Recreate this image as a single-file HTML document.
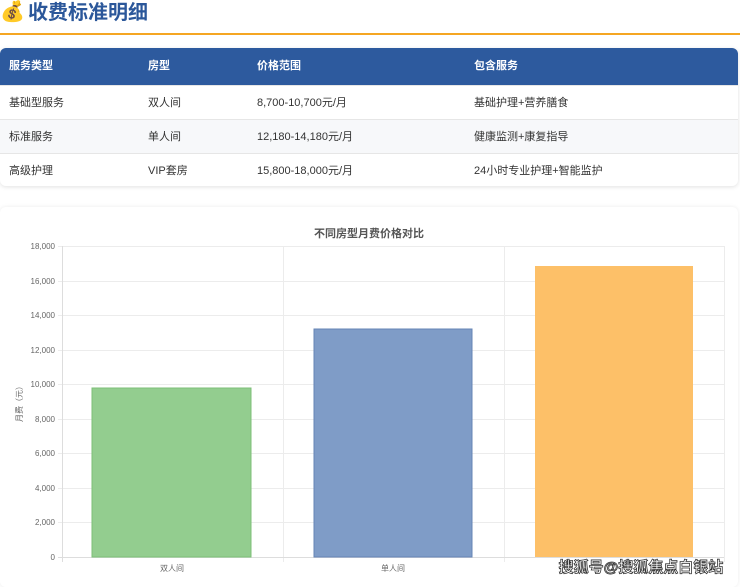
<!DOCTYPE html><html><head><meta charset="utf-8"><style>
body{margin:0;width:740px;height:582px;background:#fff;font-family:"Liberation Sans","Noto Sans CJK SC",sans-serif;overflow:hidden;position:relative}
.t{position:absolute;left:28px;top:0;font-size:20px;font-weight:bold;color:#2b579a;line-height:26px}
.line{position:absolute;left:0;top:33px;width:740px;height:2px;background:#f5a623}
.card{position:absolute;left:0;top:48px;width:738px;height:138px;border-radius:6px;box-shadow:0 1px 4px rgba(0,0,0,.12);overflow:hidden}
.row{position:absolute;left:0;width:738px;font-size:11px;color:#333}
.row span{position:absolute;top:0}
.h{background:#2d5a9e;color:#fff;font-weight:bold;height:37px;top:0;line-height:37px}
.r{height:34px;line-height:34px;border-top:1px solid #e6e6e6}
.c2{position:absolute;left:0;top:207px;width:738px;height:380px;border-radius:6px;box-shadow:0 0 4px rgba(0,0,0,.08)}
</style></head><body>
<div style="position:absolute;left:0px;top:0px;font-size:20px;line-height:24px">💰</div>
<div class="t">收费标准明细</div><div class="line"></div>
<div class="card">
<div class="row h"><span style="left:9px">服务类型</span><span style="left:148px">房型</span><span style="left:257px">价格范围</span><span style="left:474px">包含服务</span></div>
<div class="row r" style="top:37px"><span style="left:9px">基础型服务</span><span style="left:148px">双人间</span><span style="left:257px">8,700-10,700元/月</span><span style="left:474px">基础护理+营养膳食</span></div>
<div class="row r" style="top:71px;background:#f7f8fa"><span style="left:9px">标准服务</span><span style="left:148px">单人间</span><span style="left:257px">12,180-14,180元/月</span><span style="left:474px">健康监测+康复指导</span></div>
<div class="row r" style="top:105px"><span style="left:9px">高级护理</span><span style="left:148px">VIP套房</span><span style="left:257px">15,800-18,000元/月</span><span style="left:474px">24小时专业护理+智能监护</span></div>
</div>
<div class="c2"></div>
<svg style="position:absolute;left:0;top:0" width="740" height="582" font-family="Liberation Sans,Noto Sans CJK SC,sans-serif">
<text x="369" y="237" font-size="11" font-weight="bold" fill="#555" text-anchor="middle">不同房型月费价格对比</text>
<g stroke="#ececec" stroke-width="1">
<line x1="58" y1="246.5" x2="724" y2="246.5"/><line x1="58" y1="281.5" x2="724" y2="281.5"/><line x1="58" y1="315.5" x2="724" y2="315.5"/><line x1="58" y1="350.5" x2="724" y2="350.5"/><line x1="58" y1="384.5" x2="724" y2="384.5"/><line x1="58" y1="419.5" x2="724" y2="419.5"/><line x1="58" y1="453.5" x2="724" y2="453.5"/><line x1="58" y1="488.5" x2="724" y2="488.5"/><line x1="58" y1="522.5" x2="724" y2="522.5"/>
<line x1="283.5" y1="246" x2="283.5" y2="562"/><line x1="504.5" y1="246" x2="504.5" y2="562"/><line x1="724.5" y1="246" x2="724.5" y2="562"/>
</g>
<line x1="62.5" y1="246" x2="62.5" y2="562" stroke="#ddd"/><line x1="58" y1="557.5" x2="724" y2="557.5" stroke="#ddd"/>
<g font-size="8" fill="#666" text-anchor="end">
<text x="55" y="249">18,000</text><text x="55" y="284">16,000</text><text x="55" y="318">14,000</text><text x="55" y="353">12,000</text><text x="55" y="387">10,000</text><text x="55" y="422">8,000</text><text x="55" y="456">6,000</text><text x="55" y="491">4,000</text><text x="55" y="525">2,000</text><text x="55" y="560">0</text></g>
<text transform="translate(22,402) rotate(-90)" font-size="8" fill="#666" text-anchor="middle">月费（元）</text>
<rect x="92" y="388" width="159" height="169" fill="#93cd8f" stroke="#7cbf77"/>
<rect x="314" y="329" width="158" height="228" fill="#7f9cc7" stroke="#6684b5"/>
<rect x="535" y="266" width="158" height="291" fill="#fdc068"/>
<g font-size="8" fill="#666" text-anchor="middle"><text x="172" y="571">双人间</text><text x="393" y="571">单人间</text></g>
<text x="641" y="572" font-size="15" font-weight="bold" fill="#fff" stroke="#333" stroke-width="0.8" text-anchor="middle">搜狐号@搜狐焦点白银站</text>
</svg>
</body></html>
